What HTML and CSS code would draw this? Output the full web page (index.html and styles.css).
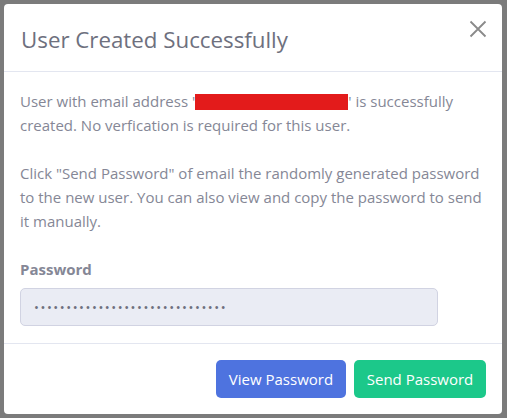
FILE: index.html
```html
<!DOCTYPE html>
<html>
<head>
<meta charset="utf-8">
<link rel="stylesheet" href="styles.css">
</head>
<body>
<div class="backdrop">
  <div class="modal">
    <div class="modal-header">
      <h5 class="modal-title">User Created Successfully</h5>
      <button class="close" aria-label="Close">
        <svg width="18" height="18" viewBox="0 0 18 18"><path d="M1.5 1.5 L16.5 16.5 M16.5 1.5 L1.5 16.5" stroke="#8a8a8a" stroke-width="1.8" fill="none"/></svg>
      </button>
    </div>
    <div class="modal-body">
      <p class="msg">User with email address '<span class="redact"></span>' is successfully created. No verfication is required for this user.<br><br>Click "Send Password" of email the randomly generated password to the new user. You can also view and copy the password to send it manually.</p>
      <label class="label">Password</label>
      <div class="input">••••••••••••••••••••••••••••••</div>
    </div>
    <div class="modal-footer">
      <button class="btn btn-primary">View Password</button>
      <button class="btn btn-success">Send Password</button>
    </div>
  </div>
</div>
</body>
</html>
```
FILE: styles.css
```css
html, body {
  margin: 0;
  padding: 0;
  height: 100%;
}
body {
  background: #7b7b7b;
  font-family: "Open Sans", "Noto Sans", sans-serif;
}
.backdrop {
  padding: 4px 5px 4px 4px;
  height: 100%;
  box-sizing: border-box;
}
.modal {
  background: #fff;
  border-radius: 4px;
  height: 410px;
  display: flex;
  flex-direction: column;
}
.modal-header {
  display: flex;
  align-items: flex-start;
  justify-content: space-between;
  height: 68px;
  box-sizing: border-box;
  padding: 20px 15px 0 17px;
  border-bottom: 1px solid #e3e6f0;
}
.modal-title {
  margin: 0;
  font-weight: 400;
  font-size: 22.3px;
  line-height: 32px;
  color: #6e707e;
}
.close {
  background: none;
  border: 0;
  padding: 0;
  margin: -4px 0 0 0;
  width: 18px;
  height: 18px;
  cursor: pointer;
}
.modal-body {
  padding: 17px 15px 0 16px;
  height: 272px;
  box-sizing: border-box;
  border-bottom: 1px solid #e3e6f0;
}
.msg {
  margin: 0;
  font-size: 15px;
  line-height: 24px;
  color: #858796;
}
.redact {
  background: #e31b1b;
  display: inline-block;
  width: 153px;
  height: 16px;
  vertical-align: -3px;
}
.label {
  display: block;
  margin-top: 24px;
  font-size: 15px;
  font-weight: 700;
  line-height: 24px;
  color: #858796;
}
.input {
  margin-top: 7px;
  width: 418px;
  height: 38px;
  box-sizing: border-box;
  background: #eaecf4;
  border: 1px solid #d1d3e2;
  border-radius: 5px;
  padding: 0 13px;
  font-size: 13px;
  line-height: 36px;
  letter-spacing: 1.55px;
  color: #6e707e;
}
.modal-footer {
  display: flex;
  justify-content: flex-end;
  gap: 8px;
  padding: 16px 16px 0 16px;
}
.btn {
  height: 38px;
  border: 0;
  border-radius: 5px;
  padding: 0 12px;
  font-family: "Open Sans", "Noto Sans", sans-serif;
  font-size: 15px;
  color: #fff;
  cursor: pointer;
}
.btn-primary {
  background: #4e73df;
  width: 130px;
}
.btn-success {
  background: #1cc88a;
  width: 132px;
}
```
